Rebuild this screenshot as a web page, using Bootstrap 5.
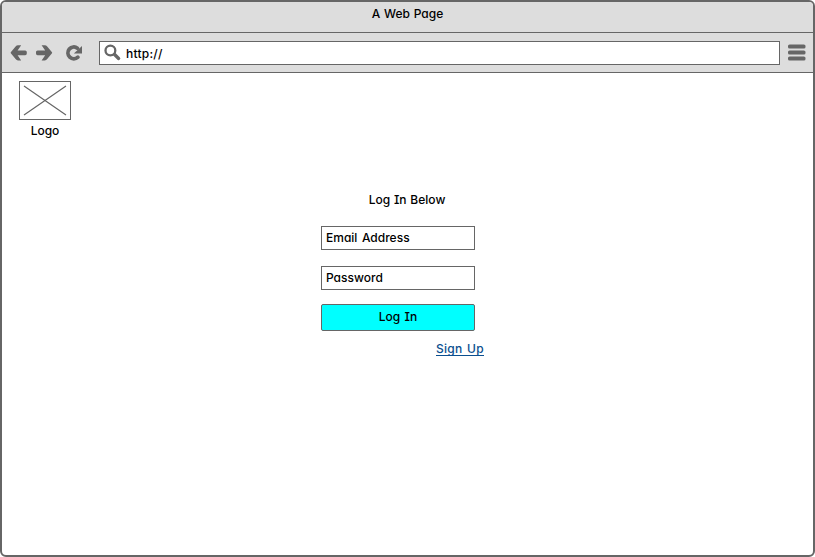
<!DOCTYPE html>
<html lang="en">
<head>
<meta charset="utf-8">
<meta name="viewport" content="width=device-width, initial-scale=1">
<title>A Web Page</title>
<link rel="stylesheet" href="https://cdn.jsdelivr.net/npm/bootstrap@5.3.0/dist/css/bootstrap.min.css">
<style>
  :root { --ink: #666; --chrome: #ddd; }
  body { font: 500 12px/20px Inter, "Open Sans", sans-serif; word-spacing: .6px; color: #000; background: #fff;
         font-feature-settings: "cv11", "cv08"; }
  .browser { height: 557px; border: 2px solid var(--ink); border-radius: 6px; }
  .titlebar { height: 31px; background: var(--chrome); border-bottom: 1px solid var(--ink); line-height: 23px; }
  .toolbar { height: 40px; background: var(--chrome); border-bottom: 1px solid var(--ink); padding: 0 7px 0 8px; }
  .toolbar svg { fill: var(--ink); }
  .forward { margin-left: 7px; }
  .reload { margin-left: 12px; }
  .address { height: 24px; margin: 0 8px 0 16px; padding-left: 4px; border: 1px solid var(--ink); letter-spacing: .25px; }
  .address span { padding-top: 2px; }
  .logo-block { width: 52px; margin: 8px 0 0 17px; }
  .logo-block svg { stroke: var(--ink); fill: #fff; margin-bottom: 1px; }
  .login { width: 154px; margin: 49px 0 0 319px; }
  .login .heading { padding-left: 18px; margin-bottom: 16px; }
  .login .form-control { height: 24px; border: 1px solid var(--ink); padding: 0 4px 2px; font: inherit; word-spacing: 1.4px; color: #000; }
  .login .form-control::placeholder { color: #000; opacity: 1; }
  .login .btn { --bs-btn-bg: #0ff; --bs-btn-hover-bg: #0ee; --bs-btn-border-color: var(--ink); --bs-btn-color: #000;
                height: 27px; margin-top: 14px; border-radius: 2px; padding: 0 0 2px; font: inherit; word-spacing: 1px; line-height: 23px; }
  .signup { color: #0b4f8f; margin: 9px -9px 0 0; line-height: 18px; border-bottom: 1px solid #0b4f8f; height: 16px; letter-spacing: .3px; word-spacing: 1px; }
</style>
<script src="https://cdn.jsdelivr.net/npm/bootstrap@5.3.0/dist/js/bootstrap.bundle.min.js"></script>
</head>
<body>
<div class="browser overflow-hidden">
  <header>
    <div class="titlebar text-center"><span>A Web Page</span></div>
    <nav class="toolbar d-flex align-items-center">
      <svg width="18" height="18" viewBox="0 0 18 18" aria-label="Back"><path d="M8 1.2H11.2L7.6 6.4H15.2q1.6 0 1.6 1.6v1.6q0 1.6-1.6 1.6H7.6L11.2 16.4H8Q6.6 16.4 5.6 15L1 9.6q-.8-.8 0-1.6L5.6 2.6Q6.6 1.2 8 1.2z"/></svg>
      <svg class="forward" width="18" height="18" viewBox="0 0 18 18" aria-label="Forward"><path transform="matrix(-1 0 0 1 17.8 0)" d="M8 1.2H11.2L7.6 6.4H15.2q1.6 0 1.6 1.6v1.6q0 1.6-1.6 1.6H7.6L11.2 16.4H8Q6.6 16.4 5.6 15L1 9.6q-.8-.8 0-1.6L5.6 2.6Q6.6 1.2 8 1.2z"/></svg>
      <svg class="reload" width="18" height="18" viewBox="0 0 18 18" aria-label="Reload"><path d="M12.4 4.2A5.9 5.9 0 1 0 12.9 13.2" fill="none" stroke="#666" stroke-width="3.8" stroke-linecap="round"/><path d="M17 2v7.6H8.8z"/></svg>
      <div class="address bg-white flex-grow-1 d-flex align-items-center">
        <svg width="18" height="18" viewBox="0 0 18 18"><circle cx="6.4" cy="6.5" r="4.9" fill="none" stroke="#666" stroke-width="2.3"/><path d="M10.6 10.6L14.6 14.4" stroke="#666" stroke-width="3.4" stroke-linecap="round"/></svg>
        <span class="ms-1">http://</span>
      </div>
      <svg width="18" height="17" viewBox="0 0 18 17" aria-label="Menu"><rect y="0.5" width="17.5" height="4" rx="1.6"/><rect y="6.5" width="17.5" height="4" rx="1.6"/><rect y="12.5" width="17.5" height="4" rx="1.6"/></svg>
    </nav>
  </header>
  <main>
    <div class="logo-block text-center">
      <svg class="d-block" width="52" height="39" viewBox="0 0 52 39"><rect x=".5" y=".5" width="51" height="38"/><path d="M5 5L47 34M47 5L5 34" stroke-width="1.2"/></svg>
      <div>Logo</div>
    </div>
    <form class="login d-flex flex-column">
      <div class="heading text-center">Log In Below</div>
      <input class="form-control rounded-0" type="text" placeholder="Email Address">
      <input class="form-control rounded-0 mt-3" type="password" placeholder="Password">
      <button class="btn w-100" type="button">Log In</button>
      <a class="signup text-decoration-none align-self-end" href="#">Sign Up</a>
    </form>
  </main>
</div>
</body>
</html>
